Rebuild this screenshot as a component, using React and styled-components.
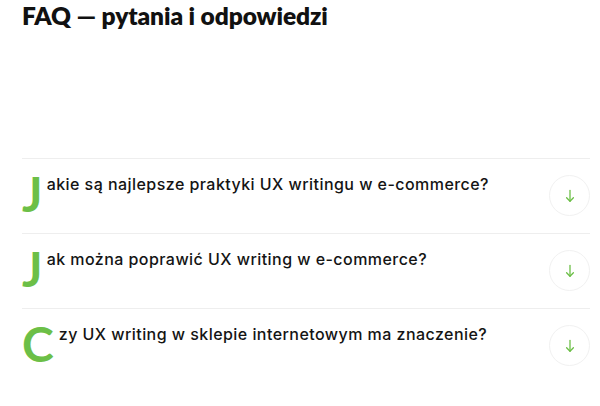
import React from "react";
import styled, { createGlobalStyle } from "styled-components";

const GlobalStyle = createGlobalStyle`
  html, body { margin: 0; padding: 0; background: #ffffff; }
  body { font-family: Lato, "Noto Sans", sans-serif; color: #141414; }
`;

const GREEN = "#6cbf47";

const Page = styled.main`
  box-sizing: border-box;
  width: 600px;
  padding: 0 10px 0 22px;
`;

const Title = styled.h2`
  margin: 0;
  font-family: Lato, sans-serif;
  font-weight: 800;
  font-size: 24.5px;
  line-height: 31px;
  letter-spacing: -0.1px;
  color: #111111;
`;

const List = styled.ul`
  list-style: none;
  margin: 127px 0 0;
  padding: 0;
`;

const Item = styled.li`
  box-sizing: border-box;
  height: 75px;
  border-top: 1px solid #eeeeee;
  display: flex;
  align-items: flex-start;
  justify-content: space-between;
`;

const Question = styled.div`
  display: flex;
  align-items: flex-start;
`;

const DropCap = styled.span`
  margin-top: 11px;
  margin-right: ${(p) => p.$gap}px;
  font-family: Lato, sans-serif;
  font-weight: 700;
  font-size: 48px;
  line-height: 48px;
  color: ${GREEN};
`;

const Text = styled.span`
  margin-top: 14px;
  font-family: Inter, sans-serif;
  font-weight: 500;
  font-size: 16px;
  line-height: 22px;
  letter-spacing: 0.45px;
  color: #141414;
  white-space: nowrap;
`;

const Toggle = styled.button`
  box-sizing: border-box;
  margin-top: 16px;
  width: 41px;
  height: 41px;
  border: 1px solid #f1f1f1;
  border-radius: 50%;
  background: #ffffff;
  padding: 0;
  display: flex;
  align-items: center;
  justify-content: center;
  cursor: pointer;
`;

const Arrow = () => (
  <svg width="12" height="14" viewBox="0 0 12 14" fill="none" stroke={GREEN} strokeWidth="1.3" strokeLinecap="round" strokeLinejoin="round">
    <path d="M6 1.5V12.2" />
    <path d="M2.6 8.8L6 12.2L9.4 8.8" />
  </svg>
);

const faqs = [
  { first: "J", rest: "akie są najlepsze praktyki UX writingu w e-commerce?", gap: 4 },
  { first: "J", rest: "ak można poprawić UX writing w e-commerce?", gap: 4 },
  { first: "C", rest: "zy UX writing w sklepie internetowym ma znaczenie?", gap: 5 },
];

export default function App() {
  return (
    <Page>
      <GlobalStyle />
      <Title>FAQ — pytania i odpowiedzi</Title>
      <List>
        {faqs.map((q) => (
          <Item key={q.rest}>
            <Question>
              <DropCap $gap={q.gap}>{q.first}</DropCap>
              <Text>{q.rest}</Text>
            </Question>
            <Toggle aria-label="Rozwiń">
              <Arrow />
            </Toggle>
          </Item>
        ))}
      </List>
    </Page>
  );
}
